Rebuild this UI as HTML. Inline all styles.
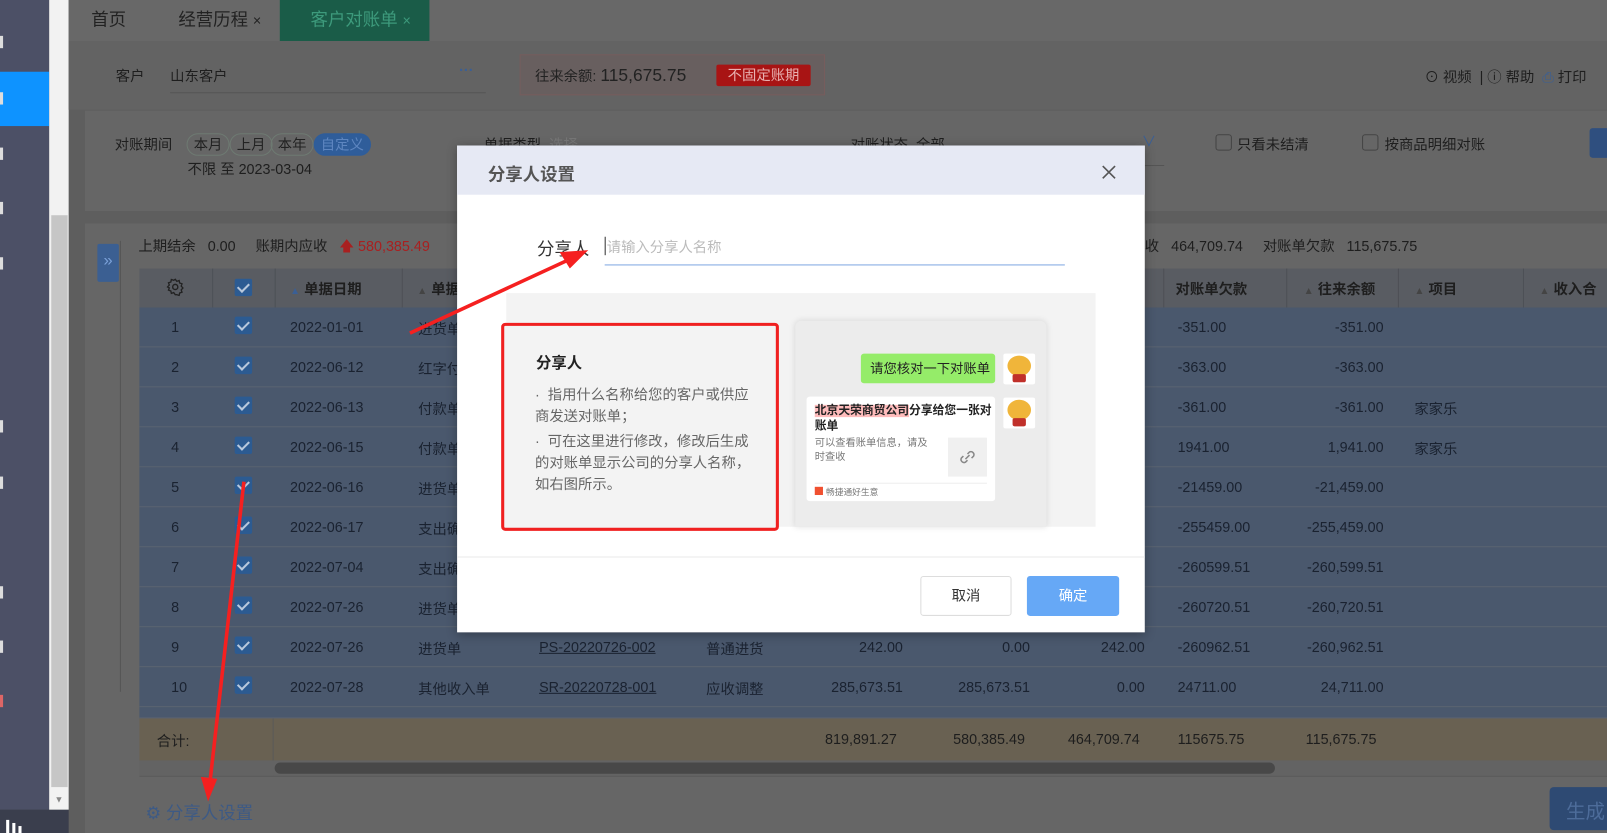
<!DOCTYPE html>
<html><head><meta charset="utf-8">
<style>
*{margin:0;padding:0;box-sizing:border-box}
body{width:1607px;height:833px;overflow:hidden;background:#5e5e5e;font-family:"Liberation Sans","Noto Sans CJK SC",sans-serif;}
#w{position:absolute;left:0;top:0;width:1568px;height:813px;transform:scale(1.02487);transform-origin:0 0;overflow:hidden;background:#5e5e5e}
.a{position:absolute;white-space:nowrap}
.t{font-size:14px;color:#1e1e1e}
.row{position:absolute;left:136px;width:1432px;height:39px;background:#4a586d;border-bottom:1px solid #5b6471}
.row span{position:absolute;top:11px;font-size:14px;color:#1a2230;white-space:nowrap}
.r{text-align:right}
.cb{position:absolute;left:229px;width:17px;height:17px;background:#2c5b92;border-radius:2px}
.cb:after{content:"";position:absolute;left:5px;top:2px;width:5px;height:9px;border:solid #b8c8dc;border-width:0 2px 2px 0;transform:rotate(45deg)}
.pill{position:absolute;top:130px;height:22px;border:1px solid #6e7a72;border-radius:11px;font-size:14px;color:#222;padding:1px 6px;line-height:18px}
</style></head><body><div id="w">
<div class="a" style="left:0;top:0;width:48px;height:813px;background:#4c5066"></div>
<div class="a" style="left:0;top:70px;width:48px;height:53px;background:#0e93ff"></div>
<div class="a" style="left:0;top:790px;width:67px;height:23px;background:#3a3e4d"></div>
<div class="a" style="left:6px;top:800px;width:3px;height:13px;background:#fff"></div>
<div class="a" style="left:12px;top:803px;width:3px;height:10px;background:#fff"></div>
<div class="a" style="left:18px;top:806px;width:3px;height:7px;background:#fff"></div>
<div class="a" style="left:0;top:35px;width:3px;height:12px;background:#ddd"></div>
<div class="a" style="left:0;top:90px;width:3px;height:12px;background:#ddd"></div>
<div class="a" style="left:0;top:144px;width:3px;height:12px;background:#ddd"></div>
<div class="a" style="left:0;top:197px;width:3px;height:12px;background:#ddd"></div>
<div class="a" style="left:0;top:251px;width:3px;height:12px;background:#ddd"></div>
<div class="a" style="left:0;top:410px;width:3px;height:12px;background:#ddd"></div>
<div class="a" style="left:0;top:465px;width:3px;height:12px;background:#ddd"></div>
<div class="a" style="left:0;top:572px;width:3px;height:12px;background:#ddd"></div>
<div class="a" style="left:0;top:625px;width:3px;height:12px;background:#ddd"></div>
<div class="a" style="left:0;top:678px;width:3px;height:12px;background:#d66"></div>
<div class="a" style="left:48px;top:0;width:19px;height:790px;background:#f2f2f2"></div>
<div class="a" style="left:50px;top:210px;width:16px;height:558px;background:#c6c6c6"></div>
<div class="a" style="left:53px;top:775px;font-size:9px;color:#888">▼</div>
<div class="a" style="left:67px;top:0;width:1501px;height:40px;background:#686868"></div>
<div class="a" style="left:89px;top:5px;font-size:17px;color:#222">首页</div>
<div class="a" style="left:174px;top:5px;font-size:17px;color:#222">经营历程 <span style="font-size:14px">×</span></div>
<div class="a" style="left:273px;top:0;width:146px;height:40px;background:#1a5c48"></div>
<div class="a" style="left:303px;top:5px;font-size:17px;color:#3d9a7c">客户对账单 <span style="font-size:14px">×</span></div>
<div class="a" style="left:67px;top:40px;width:1501px;height:67px;background:#636363"></div>
<div class="a t" style="left:113px;top:64px">客户</div>
<div class="a t" style="left:166px;top:64px">山东客户</div>
<div class="a" style="left:166px;top:90px;width:308px;height:1px;background:#555"></div>
<div class="a" style="left:448px;top:60px;font-size:14px;color:#3a5f95;font-weight:bold">···</div>
<div class="a" style="left:507px;top:53px;width:298px;height:40px;border:1px solid #765d5d;background:#685f5f"></div>
<div class="a" style="left:522px;top:64px;font-size:14px;color:#222">往来余额: <span style="font-size:17px">115,675.75</span></div>
<div class="a" style="left:699px;top:63px;width:92px;height:21px;background:#a81414;border-radius:2px;color:#e8b0b0;font-size:14px;text-align:center;line-height:21px">不固定账期</div>
<div class="a t" style="left:1390px;top:65px">⊙ 视频 &nbsp;|&nbsp;ⓘ 帮助 &nbsp;<span style="color:#3a5f95">⎙</span> 打印</div>
<div class="a" style="left:83px;top:108px;width:1485px;height:98px;background:#666"></div>
<div class="a t" style="left:112px;top:131px">对账期间</div>
<div class="pill" style="left:182px">本月</div>
<div class="pill" style="left:224px">上月</div>
<div class="pill" style="left:264px">本年</div>
<div class="pill" style="left:306px;background:#2f5d9a;border-color:#2f5d9a;color:#5e86c0">自定义</div>
<div class="a t" style="left:183px;top:155px">不限 至 2023-03-04</div>
<div class="a t" style="left:472px;top:131px">单据类型 &nbsp;<span style="color:#777">选择</span></div>
<div class="a t" style="left:830px;top:131px">对账状态 &nbsp;全部</div>
<div class="a" style="left:1114px;top:128px;font-size:14px;color:#3a5f95">∨</div>
<div class="a" style="left:1040px;top:161px;width:96px;height:1px;background:#555"></div>
<div class="a" style="left:1186px;top:131px;width:16px;height:16px;border:1px solid #444;border-radius:3px;background:#666"></div>
<div class="a t" style="left:1207px;top:131px">只看未结清</div>
<div class="a" style="left:1329px;top:131px;width:16px;height:16px;border:1px solid #444;border-radius:3px;background:#666"></div>
<div class="a t" style="left:1351px;top:131px">按商品明细对账</div>
<div class="a" style="left:1551px;top:125px;width:30px;height:29px;background:#2f4f7f;border-radius:3px"></div>
<div class="a" style="left:83px;top:218px;width:1485px;height:595px;background:#666"></div>
<div class="a" style="left:117px;top:235px;width:1px;height:440px;background:#555"></div>
<div class="a" style="left:95px;top:238px;width:21px;height:37px;background:#3b5f92;border-radius:2px;color:#7aa0d8;font-size:16px;text-align:center;line-height:34px">»</div>
<div class="a t" style="left:135px;top:230px">上期结余 &nbsp;&nbsp;0.00 &nbsp;&nbsp;&nbsp;&nbsp;账期内应收 &nbsp;&nbsp;<span style="color:#a82020">🡅 580,385.49</span></div>
<div class="a t" style="left:1117px;top:230px">收 &nbsp;&nbsp;464,709.74 &nbsp;&nbsp;&nbsp;&nbsp;对账单欠款 &nbsp;&nbsp;115,675.75</div>
<div class="a" style="left:136px;top:262px;width:1432px;height:38px;background:#595c62"></div>
<div class="a" style="left:207px;top:262px;width:1px;height:38px;background:#4d5056"></div>
<div class="a" style="left:268px;top:262px;width:1px;height:38px;background:#4d5056"></div>
<div class="a" style="left:392px;top:262px;width:1px;height:38px;background:#4d5056"></div>
<div class="a" style="left:1135px;top:262px;width:1px;height:38px;background:#4d5056"></div>
<div class="a" style="left:1255px;top:262px;width:1px;height:38px;background:#4d5056"></div>
<div class="a" style="left:1364px;top:262px;width:1px;height:38px;background:#4d5056"></div>
<div class="a" style="left:1486px;top:262px;width:1px;height:38px;background:#4d5056"></div>
<svg class="a" style="left:162px;top:271px" width="18" height="18" viewBox="0 0 18 18"><circle cx="9" cy="9" r="2.5" fill="none" stroke="#222" stroke-width="1.4"/><path d="M9 1.5l1.5 2 2.3-.8.5 2.4 2.3.8-.8 2.2 1.7 1.9-1.7 1.9.8 2.2-2.3.8-.5 2.4-2.3-.8L9 16.5l-1.5-2-2.3.8-.5-2.4-2.3-.8.8-2.2L1.5 9l1.7-1.9-.8-2.2 2.3-.8.5-2.4 2.3.8z" fill="none" stroke="#222" stroke-width="1.3"/></svg>
<div class="cb" style="top:272px"></div>
<div class="a t" style="left:283px;top:272px;font-weight:bold"><span style="color:#3a5f95;font-size:10px">▲</span> 单据日期</div>
<div class="a t" style="left:407px;top:272px;font-weight:bold"><span style="color:#444;font-size:10px">▲</span> 单据</div>
<div class="a t" style="left:1147px;top:272px;font-weight:bold">对账单欠款</div>
<div class="a t" style="left:1272px;top:272px;font-weight:bold"><span style="color:#444;font-size:10px">▲</span> 往来余额</div>
<div class="a t" style="left:1380px;top:272px;font-weight:bold"><span style="color:#444;font-size:10px">▲</span> 项目</div>
<div class="a t" style="left:1502px;top:272px;font-weight:bold"><span style="color:#444;font-size:10px">▲</span> 收入合</div>
<div class="row" style="top:300px"><span style="left:31px">1</span><span style="left:147px">2022-01-01</span><span style="left:272px">进货单</span><span style="left:1013px">-351.00</span><span class="r" style="right:218px">-351.00</span></div>
<div class="row" style="top:339px"><span style="left:31px">2</span><span style="left:147px">2022-06-12</span><span style="left:272px">红字付</span><span style="left:1013px">-363.00</span><span class="r" style="right:218px">-363.00</span></div>
<div class="row" style="top:378px"><span style="left:31px">3</span><span style="left:147px">2022-06-13</span><span style="left:272px">付款单</span><span style="left:1013px">-361.00</span><span class="r" style="right:218px">-361.00</span><span style="left:1244px">家家乐</span></div>
<div class="row" style="top:417px"><span style="left:31px">4</span><span style="left:147px">2022-06-15</span><span style="left:272px">付款单</span><span style="left:1013px">1941.00</span><span class="r" style="right:218px">1,941.00</span><span style="left:1244px">家家乐</span></div>
<div class="row" style="top:456px"><span style="left:31px">5</span><span style="left:147px">2022-06-16</span><span style="left:272px">进货单</span><span style="left:1013px">-21459.00</span><span class="r" style="right:218px">-21,459.00</span></div>
<div class="row" style="top:495px"><span style="left:31px">6</span><span style="left:147px">2022-06-17</span><span style="left:272px">支出确</span><span style="left:1013px">-255459.00</span><span class="r" style="right:218px">-255,459.00</span></div>
<div class="row" style="top:534px"><span style="left:31px">7</span><span style="left:147px">2022-07-04</span><span style="left:272px">支出确</span><span style="left:1013px">-260599.51</span><span class="r" style="right:218px">-260,599.51</span></div>
<div class="row" style="top:573px"><span style="left:31px">8</span><span style="left:147px">2022-07-26</span><span style="left:272px">进货单</span><span style="left:1013px">-260720.51</span><span class="r" style="right:218px">-260,720.51</span></div>
<div class="row" style="top:612px"><span style="left:31px">9</span><span style="left:147px">2022-07-26</span><span style="left:272px">进货单</span><span style="left:390px;text-decoration:underline">PS-20220726-002</span><span style="left:553px">普通进货</span><span class="r" style="right:687px">242.00</span><span class="r" style="right:563px">0.00</span><span class="r" style="right:451px">242.00</span><span style="left:1013px">-260962.51</span><span class="r" style="right:218px">-260,962.51</span></div>
<div class="row" style="top:651px"><span style="left:31px">10</span><span style="left:147px">2022-07-28</span><span style="left:272px">其他收入单</span><span style="left:390px;text-decoration:underline">SR-20220728-001</span><span style="left:553px">应收调整</span><span class="r" style="right:687px">285,673.51</span><span class="r" style="right:563px">285,673.51</span><span class="r" style="right:451px">0.00</span><span style="left:1013px">24711.00</span><span class="r" style="right:218px">24,711.00</span></div>
<div class="row" style="top:690px;height:11px"></div>
<div class="cb" style="top:309px"></div><div class="cb" style="top:348px"></div><div class="cb" style="top:387px"></div><div class="cb" style="top:426px"></div><div class="cb" style="top:465px"></div><div class="cb" style="top:504px"></div><div class="cb" style="top:543px"></div><div class="cb" style="top:582px"></div><div class="cb" style="top:621px"></div><div class="cb" style="top:660px"></div>
<div class="a" style="left:136px;top:701px;width:1432px;height:41px;background:#696152"></div>
<div class="a" style="left:266px;top:701px;width:1px;height:56px;background:#5a5a5a"></div>
<div class="a t" style="left:153px;top:713px">合计:</div>
<div class="a t" style="left:805px;top:713px">819,891.27</div>
<div class="a t" style="left:930px;top:713px">580,385.49</div>
<div class="a t" style="left:1042px;top:713px">464,709.74</div>
<div class="a t" style="left:1149px;top:713px">115675.75</div>
<div class="a t" style="left:1274px;top:713px">115,675.75</div>
<div class="a" style="left:136px;top:742px;width:1432px;height:15px;background:#636363"></div>
<div class="a" style="left:268px;top:744px;width:976px;height:11px;background:#484848;border-radius:6px"></div>
<div class="a" style="left:136px;top:757px;width:1432px;height:1px;background:#5a5a5a"></div>
<div class="a" style="left:142px;top:779px;font-size:17px;color:#3d5a85">⚙ 分享人设置</div>
<div class="a" style="left:1512px;top:768px;width:60px;height:42px;background:#2e4a73;border-radius:4px;color:#4d6c9a;font-size:19px;padding:9px 0 0 16px">生成</div>

<div class="a" style="left:446px;top:142px;width:671px;height:475px;background:#fff;box-shadow:0 2px 10px rgba(0,0,0,.3)"></div>
<div class="a" style="left:446px;top:142px;width:671px;height:48px;background:#e6e9f4"></div>
<div class="a" style="left:476px;top:156px;font-size:17px;font-weight:bold;color:#555">分享人设置</div>
<svg class="a" style="left:1074px;top:160px" width="16" height="16"><path d="M2 2L14 14M14 2L2 14" stroke="#555" stroke-width="1.6"/></svg>
<div class="a" style="left:524px;top:229px;font-size:17px;color:#333">分享人</div>
<div class="a" style="left:590px;top:231px;width:1px;height:18px;background:#333"></div>
<div class="a" style="left:592px;top:231px;font-size:14px;color:#bbb">请输入分享人名称</div>
<div class="a" style="left:590px;top:258px;width:449px;height:1px;background:#80a8e2"></div>
<div class="a" style="left:494px;top:286px;width:575px;height:228px;background:#f3f3f3"></div>
<div class="a" style="left:489px;top:315px;width:271px;height:203px;border:3px solid #f02020;border-radius:4px;background:#f3f3f3"></div>
<div class="a" style="left:523px;top:343px;font-size:15px;font-weight:bold;color:#222">分享人</div>
<div class="a" style="left:522px;top:375px;font-size:14px;color:#666;line-height:21px">·&nbsp; 指用什么名称给您的客户或供应<br>商发送对账单；<br><span style="display:block;height:3px"></span>·&nbsp; 可在这里进行修改，修改后生成<br>的对账单显示公司的分享人名称，<br>如右图所示。</div>
<div class="a" style="left:776px;top:313px;width:245px;height:201px;background:#ececec;border-radius:6px 6px 0 0;box-shadow:0 0 6px rgba(0,0,0,.12)"></div>
<div class="a" style="left:840px;top:345px;width:131px;height:29px;background:#95ec69;border-radius:3px;font-size:13px;color:#222;line-height:29px;padding-left:9px">请您核对一下对账单</div>
<div class="a" style="left:979px;top:345px;width:31px;height:30px;background:#fff;border-radius:2px"></div>
<div class="a" style="left:983px;top:347px;width:23px;height:20px;background:#f0b53a;border-radius:50%"></div>
<div class="a" style="left:988px;top:365px;width:13px;height:8px;background:#c0302a;border-radius:2px"></div>
<div class="a" style="left:979px;top:388px;width:31px;height:30px;background:#fff;border-radius:2px"></div>
<div class="a" style="left:983px;top:390px;width:23px;height:20px;background:#f0b53a;border-radius:50%"></div>
<div class="a" style="left:988px;top:408px;width:13px;height:8px;background:#c0302a;border-radius:2px"></div>
<div class="a" style="left:787px;top:387px;width:184px;height:102px;background:#fff;border-radius:3px"></div>
<div class="a" style="left:795px;top:394px;font-size:11.5px;font-weight:bold;color:#222;line-height:15px"><span style="background:#ffbcbc">北京天荣商贸公司</span>分享给您一张对<br>账单</div>
<div class="a" style="left:795px;top:426px;font-size:10px;color:#777;line-height:14px">可以查看账单信息，请及<br>时查收</div>
<div class="a" style="left:925px;top:427px;width:38px;height:38px;background:#f0f0f0"></div>
<svg class="a" style="left:934px;top:436px" width="20" height="20"><path d="M8 12l4-4M6 9l-2 2a3 3 0 0 0 4 4l2-2M14 11l2-2a3 3 0 0 0-4-4l-2 2" stroke="#888" stroke-width="1.5" fill="none"/></svg>
<div class="a" style="left:795px;top:471px;width:168px;height:1px;background:#eee"></div>
<div class="a" style="left:795px;top:475px;width:8px;height:8px;background:#f05030"></div>
<div class="a" style="left:806px;top:474px;font-size:8.5px;color:#777">畅捷通好生意</div>
<div class="a" style="left:446px;top:543px;width:671px;height:1px;background:#eaeaea"></div>
<div class="a" style="left:898px;top:562px;width:89px;height:39px;border:1px solid #ddd;border-radius:3px;font-size:14px;color:#333;text-align:center;line-height:37px">取消</div>
<div class="a" style="left:1002px;top:562px;width:90px;height:39px;background:#66a8f6;border-radius:3px;font-size:14px;color:#fff;text-align:center;line-height:39px">确定</div>
<svg class="a" style="left:0;top:0" width="1568" height="813">
<path d="M400 325L556 253" stroke="#f52020" stroke-width="3.5" fill="none"/>
<path d="M574 244L546 246L556 262Z" fill="#f52020"/>
<path d="M238 470L205 762" stroke="#f52020" stroke-width="3.5" fill="none"/>
<path d="M203 782L196 758L212 760Z" fill="#f52020"/>
</svg>
</div></body></html>
